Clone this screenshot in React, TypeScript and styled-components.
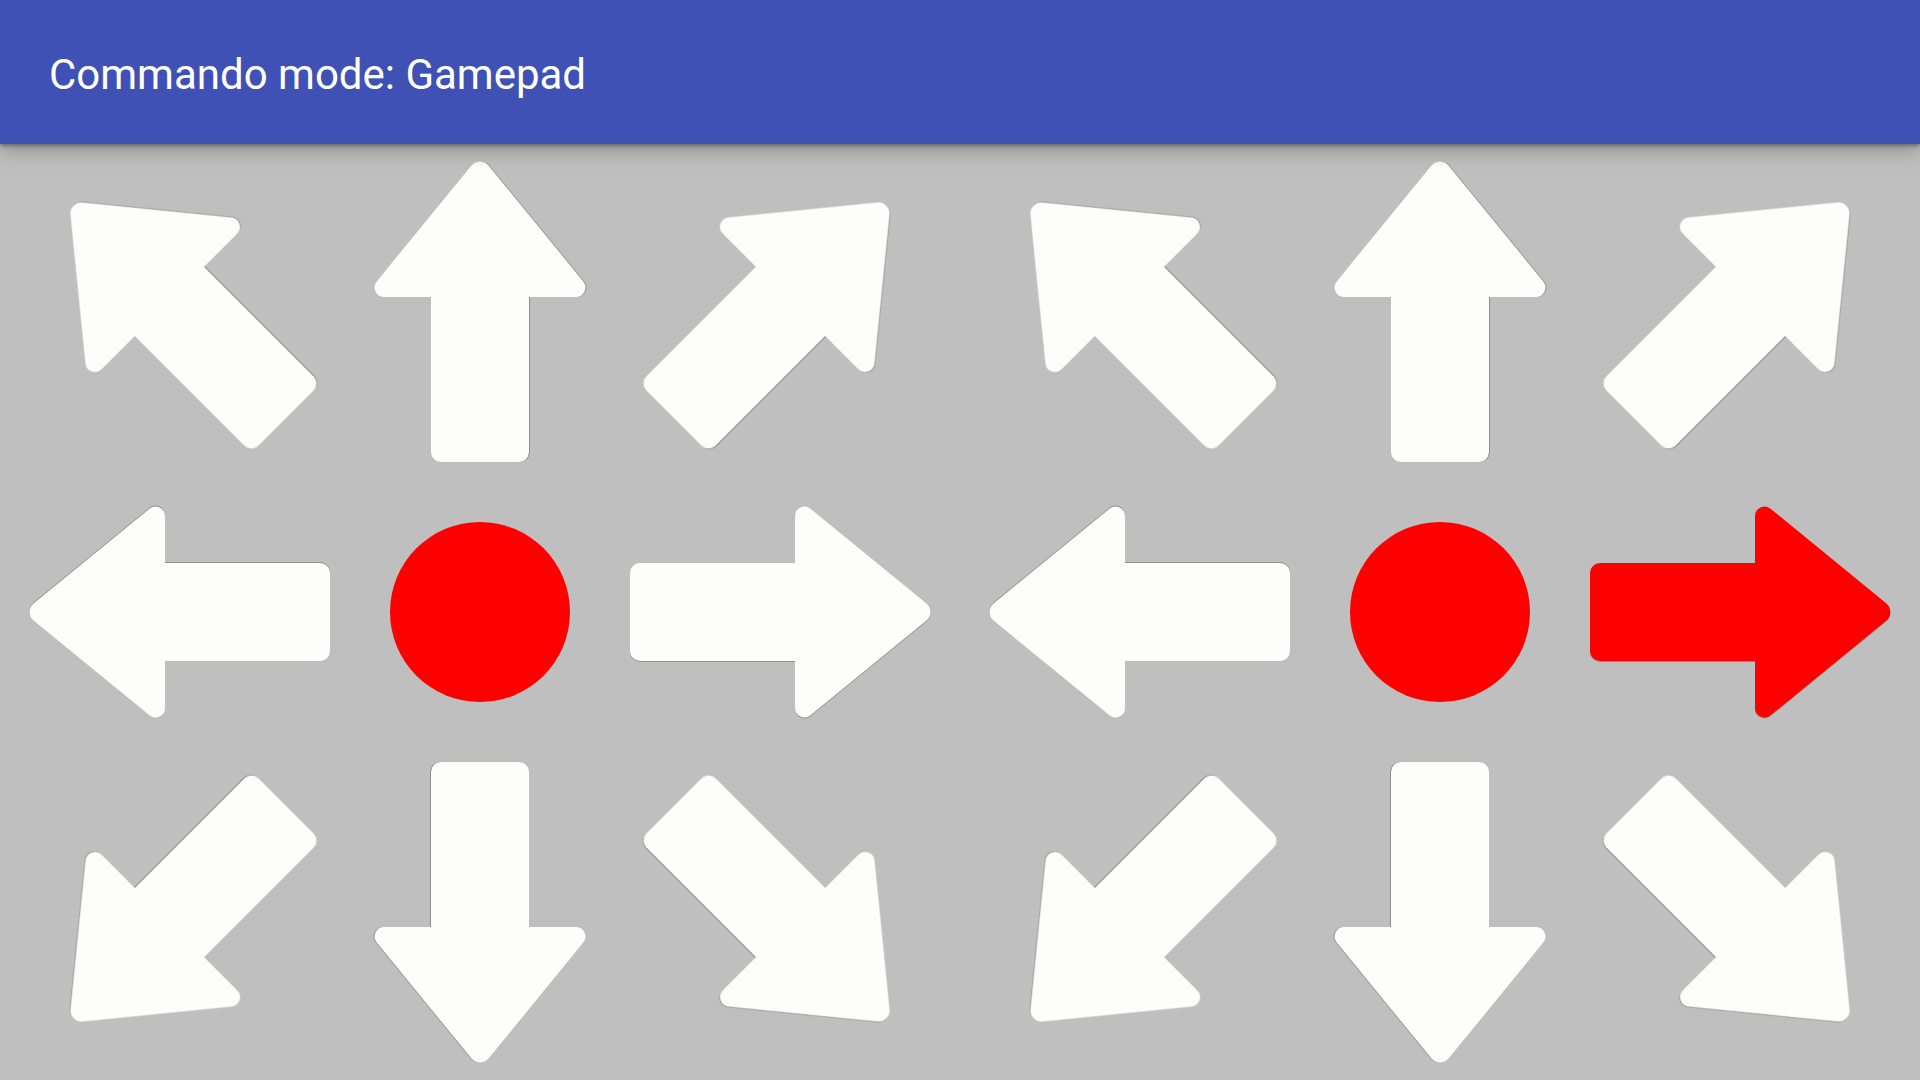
import React from 'react'
import styled, { createGlobalStyle } from 'styled-components'

const GlobalStyle = createGlobalStyle`
  html, body, #root {
    margin: 0;
    height: 100%;
  }
  body {
    font-family: Roboto, 'Noto Sans', sans-serif;
    background: #bfbfbf;
  }
`

const Screen = styled.div`
  display: flex;
  flex-direction: column;
  height: 100vh;
  overflow: hidden;
`

const Toolbar = styled.header`
  position: relative;
  z-index: 1;
  flex: 0 0 144px;
  box-sizing: border-box;
  display: flex;
  align-items: center;
  padding: 4px 0 0 49px;
  background: #3f51b5;
  color: #ffffff;
  font-size: 42px;
  box-shadow: 0 2px 4px rgba(0, 0, 0, 0.35), 0 8px 18px rgba(0, 0, 0, 0.22);
`

const Title = styled.h1`
  margin: 0;
  font-size: inherit;
  font-weight: 400;
`

const Board = styled.main`
  flex: 1;
  display: flex;
  background: #bfbfbf;
`

const PadGrid = styled.section`
  flex: 1;
  display: grid;
  grid-template-columns: repeat(3, 300px);
  grid-template-rows: repeat(3, 300px);
  align-content: center;
  justify-content: center;
`

const Cell = styled.div`
  display: flex;
  align-items: center;
  justify-content: center;
`

const ArrowSvg = styled.svg<{ $angle: number }>`
  width: 300px;
  height: 300px;
  overflow: visible;
  transform: rotate(${(p) => p.$angle}deg);
  filter: drop-shadow(0 1px 0.5px rgba(0, 0, 0, 0.25));
`

const Dot = styled.div`
  width: 180px;
  height: 180px;
  border-radius: 50%;
  background: #ff0000;
`

// arrow pointing right, drawn in a 300x300 cell, all corners rounded
const ARROW_PATH =
  'M0,111 A10,10 0 0 1 10,101 L165,101 L165,54 A9.5,9.5 0 0 1 180.49,46.65 ' +
  'L296.16,141.14 A11.44,11.44 0 0 1 296.16,158.86 L180.49,253.35 ' +
  'A9.5,9.5 0 0 1 165,246 L165,199 L10,199 A10,10 0 0 1 0,189 Z'

const Arrow = ({ angle, pressed }: { angle: number; pressed: boolean }) => (
  <ArrowSvg $angle={angle} viewBox="0 0 300 300">
    <path d={ARROW_PATH} fill={pressed ? '#ff0000' : '#fdfdfb'} />
  </ArrowSvg>
)

const buttons: (number | null)[] = [-135, -90, -45, 180, null, 0, 135, 90, 45]

const Pad = ({ pressed }: { pressed?: number }) => (
  <PadGrid>
    {buttons.map((angle, i) => (
      <Cell key={i}>
        {angle === null ? <Dot /> : <Arrow angle={angle} pressed={pressed === i} />}
      </Cell>
    ))}
  </PadGrid>
)

export default function App() {
  return (
    <Screen>
      <GlobalStyle />
      <Toolbar>
        <Title>Commando mode: Gamepad</Title>
      </Toolbar>
      <Board>
        <Pad />
        <Pad pressed={5} />
      </Board>
    </Screen>
  )
}
